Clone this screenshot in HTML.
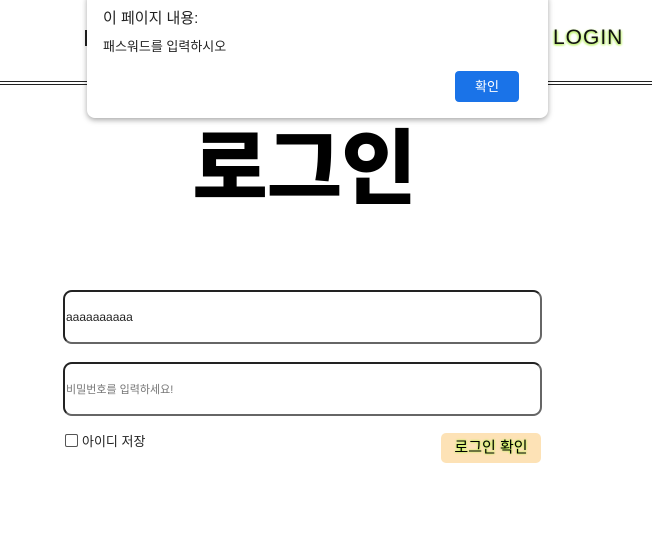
<!DOCTYPE html>
<html><head><meta charset="utf-8"><style>
body{margin:0;width:652px;height:537px;background:#fff;position:relative;overflow:hidden;font-family:"Liberation Sans","Noto Sans CJK KR",sans-serif}
.hl{position:absolute;left:0;width:652px;height:1px;background:#222}
.login{position:absolute;left:553px;top:26px;font-size:21px;color:#111;letter-spacing:1px;text-shadow:1px 1px 2px #b8f060,-1px 1px 2px #b8f060;font-family:"Liberation Sans",sans-serif}
.title{position:absolute;left:184px;top:102px;width:240px;text-align:center;font-family:"Noto Sans CJK KR",sans-serif;font-weight:900;font-size:82px;line-height:120px;color:#000;letter-spacing:-1px}
.inp{position:absolute;left:63px;width:474px;height:50px;border:2px solid #222;border-right-color:#666;border-bottom-color:#666;border-radius:9px;font-size:12px;display:flex;align-items:center;padding-left:1px;box-sizing:content-box}
.dlg{position:absolute;left:87px;top:-8px;width:461px;height:126px;background:#fff;border-radius:8px;box-shadow:0 2px 6px rgba(0,0,0,.35)}
.btn{position:absolute;left:441px;top:433px;width:100px;height:30px;background:#fde2b6;border-radius:5px;font-size:15px;text-align:center;line-height:30px;text-shadow:0 0 2px #8f0}
</style></head><body>
<div style="position:absolute;left:85px;top:30px;width:3px;height:16px;background:#222"></div>
<div class="hl" style="top:81px"></div><div class="hl" style="top:84px"></div>
<div class="login">LOGIN</div>
<div class="title">로그인</div>
<div class="inp" style="top:290px;color:#222">aaaaaaaaaa</div>
<div class="inp" style="top:362px;color:#777;font-size:11px">비밀번호를 입력하세요!</div>
<div style="position:absolute;left:65px;top:434px;width:11px;height:11px;border:1px solid #555;border-radius:2px"></div>
<div style="position:absolute;left:82px;top:431px;font-size:13px;color:#222">아이디 저장</div>
<div class="btn">로그인 확인</div>
<div class="dlg">
<div style="position:absolute;left:16px;top:15px;font-size:15px;color:#222">이 페이지 내용:</div>
<div style="position:absolute;left:16px;top:44px;font-size:13px;color:#222">패스워드를 입력하시오</div>
<div style="position:absolute;left:368px;top:79px;width:64px;height:31px;background:#1a73e8;border-radius:4px;color:#fff;font-size:13px;text-align:center;line-height:31px">확인</div>
</div>
</body></html>
